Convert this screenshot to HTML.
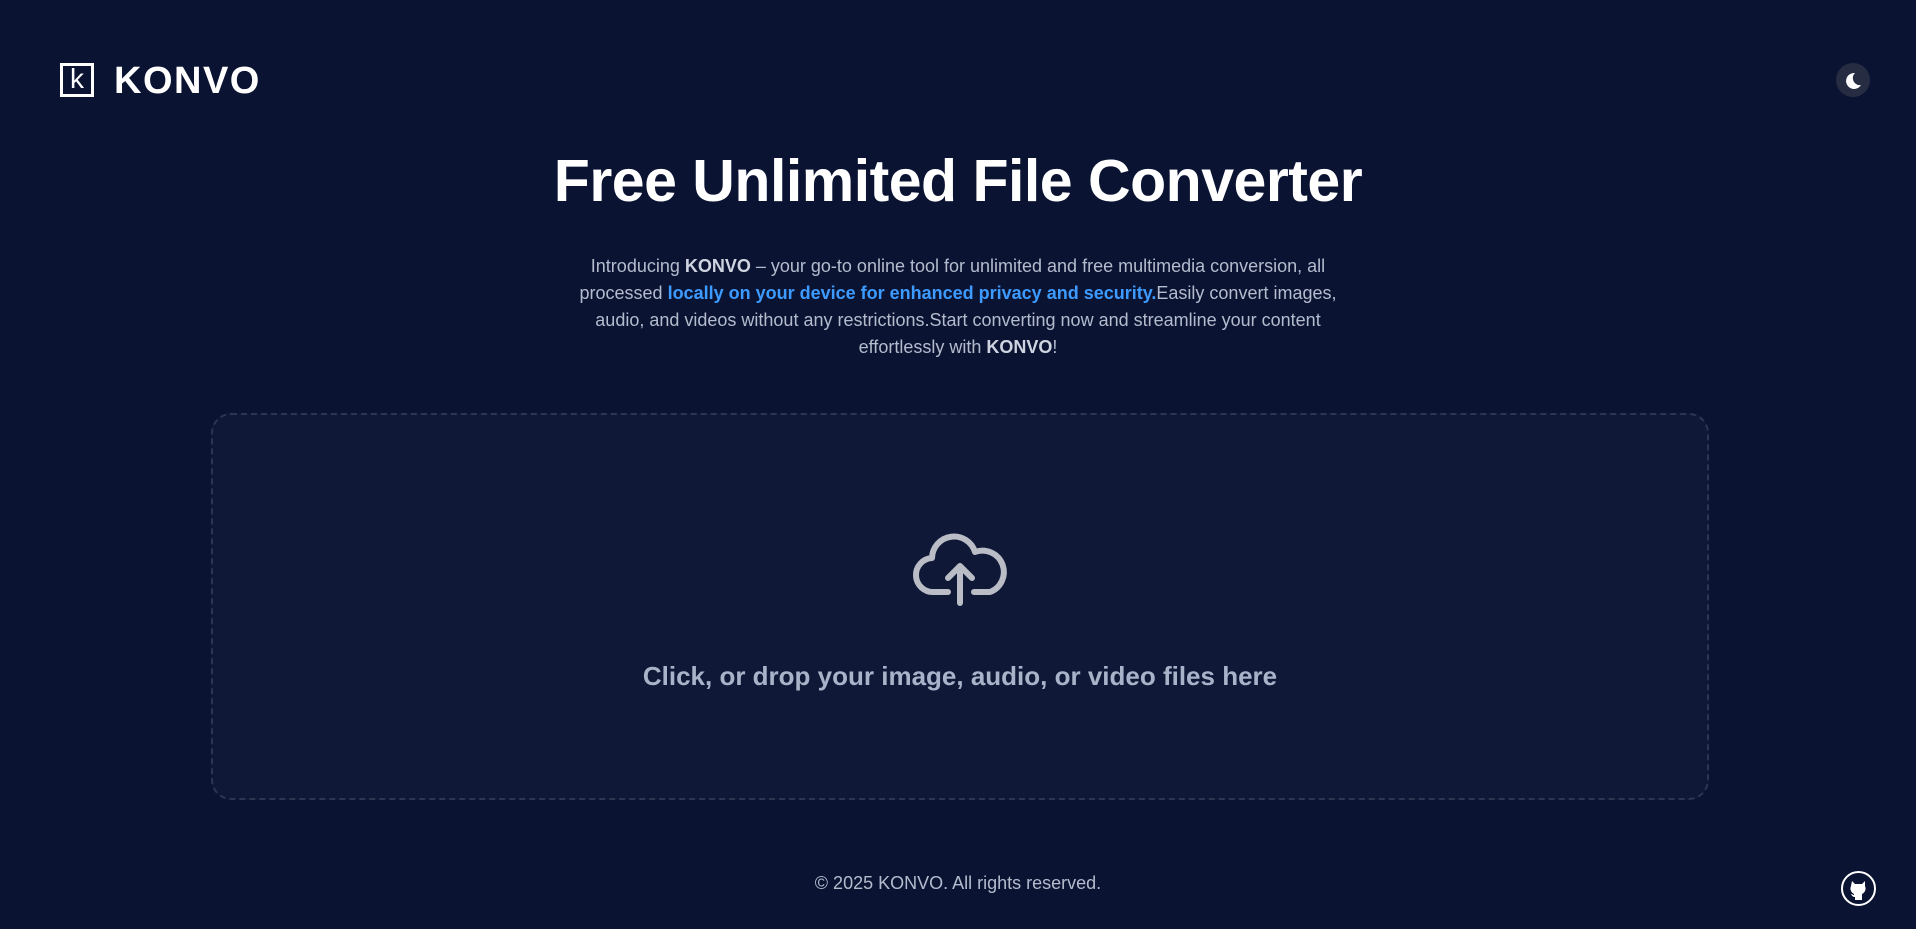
<!DOCTYPE html>
<html><head><meta charset="utf-8"><style>
*{margin:0;padding:0;box-sizing:border-box}
html,body{width:1916px;height:929px;overflow:hidden;background:#0b1333;font-family:"Liberation Sans",sans-serif;color:#b3bccd}
.logo{position:absolute;left:60px;top:63px;width:34px;height:34px;border:3px solid #fff}
.logo span{position:absolute;left:7px;top:-3px;color:#fff;font-size:28px;font-weight:400}
.brand{position:absolute;left:114px;top:60px;color:#fff;font-size:38px;font-weight:bold;letter-spacing:1.5px}
.moon{position:absolute;left:1836px;top:63px;width:34px;height:34px;border-radius:50%;background:#262d43}
h1{position:absolute;left:0;width:1916px;top:147px;text-align:center;color:#fff;font-size:59px;font-weight:bold;letter-spacing:-0.5px}
p.intro{position:absolute;left:573px;width:770px;top:253px;text-align:center;font-size:18px;line-height:27px}
p.intro b{color:#cfd5e0}
p.intro .bl{color:#3d9bff}
.drop{position:absolute;left:211px;top:413px;width:1498px;height:387px;border:2px dashed #2c3650;border-radius:20px;background:#0f1937}
.drop .t{position:absolute;left:0;width:100%;top:246px;text-align:center;font-size:26px;font-weight:bold;color:#a8b3c9}
.drop svg{position:absolute;left:699px;top:108px}
.foot{position:absolute;left:0;width:1916px;top:873px;text-align:center;font-size:18px}
.gh{position:absolute;left:1841px;top:871px;width:35px;height:35px;border:2px solid #fff;border-radius:50%}
</style></head><body>
<div class="logo"><span>k</span></div>
<div class="brand">KONVO</div>
<div class="moon"><svg width="34" height="34" viewBox="0 0 34 34"><path d="M19 10a8 8 0 1 0 6 12a7 7 0 0 1-6-12z" fill="#fff"/></svg></div>
<h1>Free Unlimited File Converter</h1>
<p class="intro">Introducing <b>KONVO</b> – your go-to online tool for unlimited and free multimedia conversion, all processed <b class="bl">locally on your device for enhanced privacy and security.</b>Easily convert images, audio, and videos without any restrictions.Start converting now and streamline your content effortlessly with <b>KONVO</b>!</p>
<div class="drop">
<svg width="100" height="86" viewBox="0 0 100 86" fill="none" stroke="#babdc5" stroke-width="6" stroke-linecap="round" stroke-linejoin="round">
<path d="M36 69H22a17 17 0 0 1-2-34a22 22 0 0 1 43-6a20 20 0 0 1 15 40H62"/>
<path d="M48 80V43M36 55l12-12l12 12"/>
</svg>
<div class="t">Click, or drop your image, audio, or video files here</div>
</div>
<div class="foot">© 2025 KONVO. All rights reserved.</div>
<div class="gh"><svg width="31" height="31" viewBox="0 0 31 31"><path d="M9 8l3 3h7l3-3v5a6 6 0 0 1-3 8v6h-7v-3c-2 0-3-1-4-3 1 0 2 1 3 1v-1a6 6 0 0 1-3-8z" fill="#fff"/></svg></div>
</body></html>
